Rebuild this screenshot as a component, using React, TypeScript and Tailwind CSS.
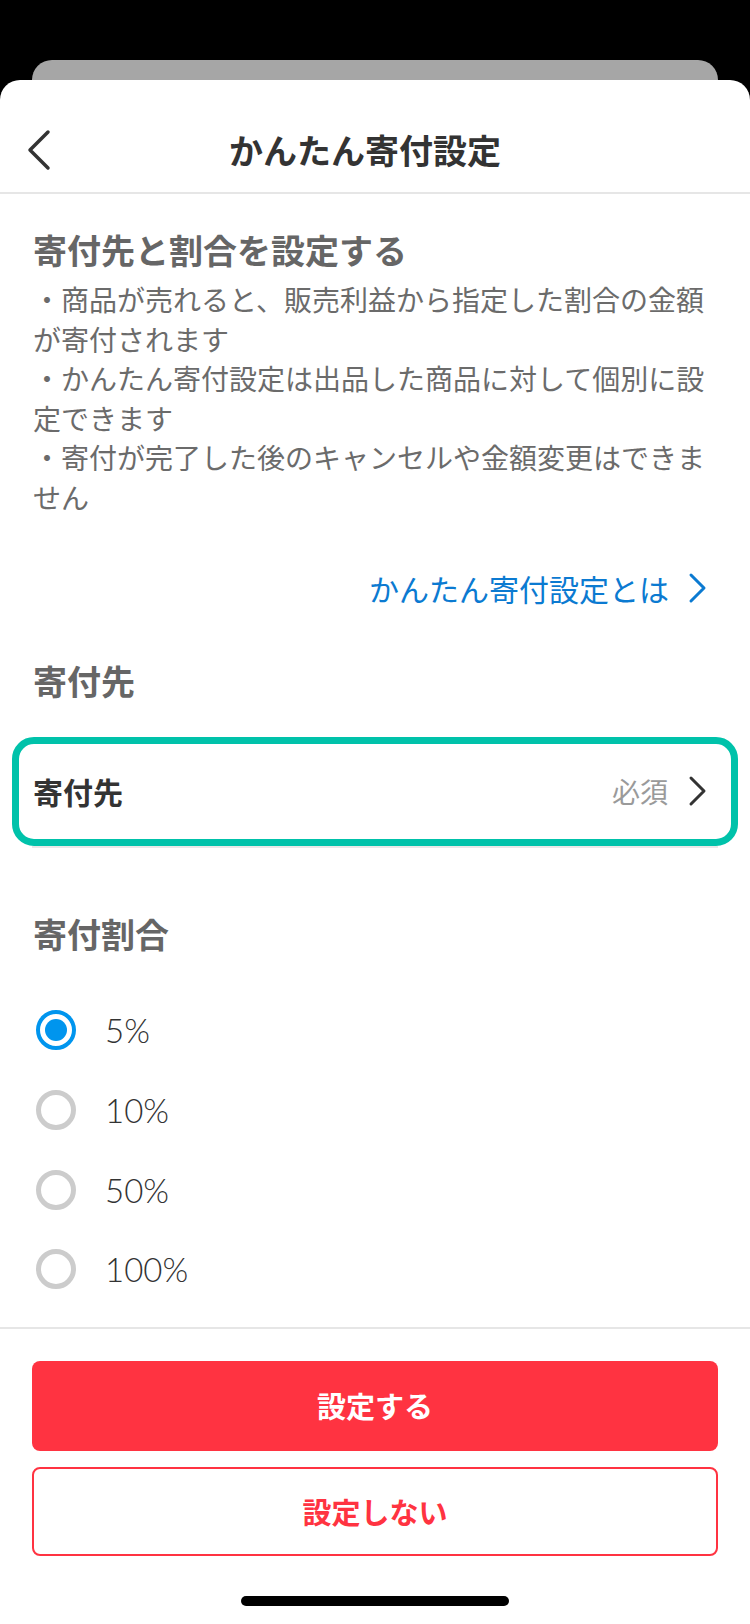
import { useState } from "react";

const rates = ["5%", "10%", "50%", "100%"];

function Chevron({ color, w, h, sw }: { color: string; w: number; h: number; sw: number }) {
  return (
    <svg width={w} height={h} viewBox={`0 0 ${w} ${h}`} fill="none">
      <path
        d={`M${sw} ${sw} L${w - sw} ${h / 2} L${sw} ${h - sw}`}
        stroke={color}
        strokeWidth={sw}
        strokeLinecap="round"
        strokeLinejoin="round"
      />
    </svg>
  );
}

export default function App() {
  const [rate, setRate] = useState("5%");

  return (
    <div
      className="w-[750px] h-[1624px] bg-black flex flex-col overflow-hidden"
      style={{ fontFamily: '"Noto Sans CJK JP", "Noto Sans", sans-serif' }}
    >
      {/* stacked sheet behind */}
      <div className="h-[60px] shrink-0" />
      <div className="mx-[32px] h-[20px] shrink-0 rounded-t-[20px] bg-[#a6a6a6]" />

      {/* main sheet */}
      <div className="flex-1 bg-white rounded-t-[20px] flex flex-col">
        {/* header */}
        <div className="grid grid-cols-[60px_1fr_80px] items-center h-[114px] pt-[28px] border-b-2 border-[#e6e6e6]">
          <button className="pl-[26px] flex items-center">
            <svg width="26" height="44" viewBox="0 0 26 44" fill="none">
              <path d="M22 4 L4 22 L22 40" stroke="#333" strokeWidth="3.5" strokeLinecap="round" strokeLinejoin="round" />
            </svg>
          </button>
          <h1 className="text-center text-[34px] leading-[40px] font-bold text-[#333]">かんたん寄付設定</h1>
          <div />
        </div>

        {/* description */}
        <div className="px-[33px] pt-[36px]">
          <h2 className="text-[34px] leading-[40px] font-bold text-[#666]">寄付先と割合を設定する</h2>
          <div className="mt-[10px] text-[28px] leading-[39.6px] text-[#6b6b6b]">
            <p>・商品が売れると、販売利益から指定した割合の金額が寄付されます</p>
            <p>・かんたん寄付設定は出品した商品に対して個別に設定できます</p>
            <p>・寄付が完了した後のキャンセルや金額変更はできません</p>
          </div>
        </div>

        {/* link */}
        <div className="mt-[50px] h-[40px] flex items-center justify-end pr-[43px] gap-[19px]">
          <span className="text-[30px] leading-[40px] text-[#0b7ad1]">かんたん寄付設定とは</span>
          <Chevron color="#0b7ad1" w={19} h={32} sw={3} />
        </div>

        {/* donation target */}
        <h3 className="mt-[53px] px-[33px] text-[34px] leading-[40px] font-bold text-[#666]">寄付先</h3>
        <div className="mt-[36px] mx-[12px] h-[109px] border-[7px] border-[#00c2aa] rounded-[22px] flex items-center justify-between pl-[14px] pr-[24px]">
          <span className="text-[30px] leading-[40px] font-bold text-[#333]">寄付先</span>
          <div className="flex items-center gap-[20px]">
            <span className="text-[28px] leading-[40px] text-[#9a9a9a]">必須</span>
            <Chevron color="#333" w={19} h={32} sw={3} />
          </div>
        </div>
        <div className="mx-[32px] h-[2px] bg-[#e8e8e8]" />

        {/* rate */}
        <h3 className="mt-[66px] px-[33px] text-[34px] leading-[40px] font-bold text-[#666]">寄付割合</h3>
        <div className="mt-[37px] flex flex-col">
          {rates.map((r) => {
            const on = r === rate;
            return (
              <button
                key={r}
                onClick={() => setRate(r)}
                className="h-[79.7px] flex items-center pl-[36px] gap-[29px]"
              >
                <span
                  className={`w-[40px] h-[40px] rounded-full flex items-center justify-center ${
                    on ? "border-[4.5px] border-[#0095ee]" : "border-[5px] border-[#cccccc]"
                  }`}
                >
                  {on && <span className="w-[22px] h-[22px] rounded-full bg-[#0095ee]" />}
                </span>
                <span
                  className="text-[33px] leading-[40px] font-light text-[#333]"
                  style={{ fontFamily: "Lato, sans-serif" }}
                >
                  {r}
                </span>
              </button>
            );
          })}
        </div>

        {/* footer */}
        <div className="mt-auto border-t-2 border-[#e6e6e6] pt-[32px] px-[32px] flex flex-col gap-[16px]">
          <button className="h-[90px] rounded-[8px] bg-[#ff3341] text-white text-[29px] font-bold">設定する</button>
          <button className="h-[89px] rounded-[8px] border-2 border-[#ff3341] bg-white text-[#ff3341] text-[29px] font-bold">
            設定しない
          </button>
        </div>
        <div className="mt-[40px] mb-[18px] flex justify-center">
          <div className="w-[268px] h-[10px] rounded-full bg-black" />
        </div>
      </div>
    </div>
  );
}
